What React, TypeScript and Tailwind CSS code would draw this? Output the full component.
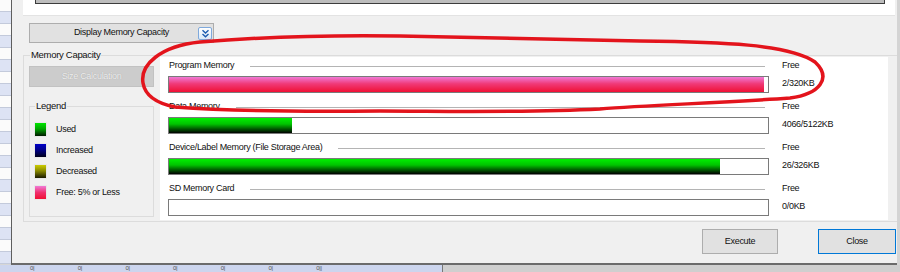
import React from 'react';

const memories = [
  { name: 'Program Memory', free: 2, total: 320, kind: 'pink' },
  { name: 'Data Memory', free: 4066, total: 5122, kind: 'green' },
  { name: 'Device/Label Memory (File Storage Area)', free: 26, total: 326, kind: 'green' },
  { name: 'SD Memory Card', free: 0, total: 0, kind: 'green' },
];

const legend = [
  { label: 'Used', cls: 'bg-[linear-gradient(to_bottom,#00e600,#00a800_45%,#001a00)]' },
  { label: 'Increased', cls: 'bg-[linear-gradient(to_bottom,#0000c8,#00008a_45%,#00001a)]' },
  { label: 'Decreased', cls: 'bg-[linear-gradient(to_bottom,#cccc00,#8a8a00_45%,#1a1a00)]' },
  { label: 'Free: 5% or Less', cls: 'bg-[linear-gradient(to_bottom,#f07ad6,#f0306e_50%,#f01034)]' },
];

const BAR_INNER = 599;

function MemoryRow({ m }: { m: (typeof memories)[number] }) {
  const used = m.total > 0 ? Math.round(((m.total - m.free) / m.total) * BAR_INNER) : 0;
  const fill =
    m.kind === 'pink'
      ? 'bg-[linear-gradient(to_bottom,#f07ad6,#f03a78_45%,#f01034)]'
      : 'bg-[linear-gradient(to_bottom,#00f000,#00c400_40%,#000000)]';
  return (
    <div className="flex h-[41px]">
      <div className="w-[601px] flex flex-col">
        <div className="h-[14px] flex items-center pl-[1px]">
          <span className="whitespace-nowrap">{m.name}</span>
          <div className="flex-1 ml-[16px] mr-[4px] h-px bg-[#b4b4b4]" />
        </div>
        <div className="mt-[3px] h-[17px] border border-[#7a7a7a] bg-white">
          <div className={`h-full ${fill}`} style={{ width: used }} />
        </div>
      </div>
      <div className="ml-[13px] flex flex-col">
        <div className="h-[14px] flex items-center">Free</div>
        <div className="h-[20px] flex items-center mt-[1px]">
          {m.free}/{m.total}KB
        </div>
      </div>
    </div>
  );
}

export default function App() {
  return (
    <div className="relative w-[900px] h-[272px] overflow-hidden bg-[#d6d6d6] text-[9px] tracking-[-0.3px] text-[#111] font-['Liberation_Sans','Arial',sans-serif]">
      <div className="flex h-[265px]">
        {/* sheet behind */}
        <div className="w-[11px] flex flex-col">
          {Array.from({ length: 22 }).map((_, i) => (
            <div
              key={i}
              className={`h-[12px] shrink-0 border-b border-[#c3cadb] ${i % 2 ? 'bg-[#dde3f4]' : 'bg-[#fbfbfb]'}`}
            />
          ))}
        </div>

        {/* dialog */}
        <div className="w-[886px] h-[265px] bg-[#f0f0f0] border-l border-[#5e5e5e] border-b-2 border-b-[#6b6b6b] flex flex-col">
          <div className="ml-[11px] mr-[2px] h-[16px] shrink-0 bg-white border-b border-[#e3e3e3]">
            <div className="ml-[12px] w-[850px] h-[4px] bg-[#bdbdbd] border-x border-b border-[#3c3c3c]" />
          </div>

          <button className="relative ml-[17px] mt-[7px] w-[185px] h-[20px] shrink-0 bg-[#e1e1e1] border border-[#adadad] text-center">
            Display Memory Capacity
            <span className="absolute right-[1px] top-[3px] w-[14px] h-[13px] rounded-[2px] border border-[#7fa9dc] bg-[linear-gradient(to_bottom,#ffffff,#dbe9f8)] flex items-center justify-center">
              <svg width="9" height="9" viewBox="0 0 9 9" fill="none" stroke="#1d5cb0" strokeWidth="1.4">
                <path d="M1.5 1.2 L4.5 4 L7.5 1.2" />
                <path d="M1.5 5 L4.5 7.8 L7.5 5" />
              </svg>
            </span>
          </button>

          {/* Memory Capacity group */}
          <div className="relative ml-[11px] mt-[12px] h-[167px] shrink-0 border-t border-l border-b border-[#dcdcdc] flex">
            <span className="absolute -top-[7px] left-[6px] px-[1px] bg-[#f0f0f0] leading-[12px] text-[9.5px]">
              Memory Capacity
            </span>

            <div className="ml-[5px] w-[125px] flex flex-col">
              <div className="mt-[10px] h-[21px] bg-[#cccccc] border border-[#c2c2c2] flex items-center justify-center text-[#efefef] [text-shadow:0_0_1px_#9a9a9a]">
                Size Calculation
              </div>
              <div className="relative mt-[19px] h-[111px] border border-[#dcdcdc]">
                <span className="absolute -top-[7px] left-[5px] px-[1px] bg-[#f0f0f0] leading-[12px] text-[9.5px]">
                  Legend
                </span>
                <div className="mt-[15px] ml-[4px] flex flex-col gap-[6px]">
                  {legend.map((l) => (
                    <div key={l.label} className="flex items-center h-[15px]">
                      <div className={`w-[13px] h-[15px] border border-[#e8e8e8] ${l.cls}`} />
                      <span className="ml-[9px]">{l.label}</span>
                    </div>
                  ))}
                </div>
              </div>
            </div>

            <div className="ml-[6px] mt-[1px] w-[728px] h-[163px] bg-white pl-[8px] pt-[2px]">
              {memories.map((m) => (
                <MemoryRow key={m.name} m={m} />
              ))}
            </div>
          </div>

          <div className="mt-[7px] mr-[1px] flex justify-end gap-[40px]">
            <button className="w-[76px] h-[25px] bg-[#e1e1e1] border border-[#adadad]">Execute</button>
            <button className="w-[78px] h-[25px] bg-[#e1e1e1] border border-[#0078d7]">Close</button>
          </div>
        </div>

        <div className="flex-1 bg-[#d4d4d4]" />
      </div>

      {/* grid header strip below */}
      <div className="flex h-[7px]">
        <div className="w-[443px] bg-[#ccd5ee] border-r border-[#777] flex pl-[30px] overflow-hidden">
          {['0|', '0|', '0|', '0|', '0|', '0|', '0||'].map((t, i) => (
            <span key={i} className="w-[47.7px] shrink-0 text-[6px] leading-[7px] text-[#555]">
              {t}
            </span>
          ))}
        </div>
        <div className="flex-1 bg-[#cfcfcf]" />
      </div>

      {/* hand-drawn annotation */}
      <svg className="absolute inset-0 pointer-events-none" width="900" height="272" viewBox="0 0 900 272" fill="none">
        <path
          d="M 143 83 C 140 65, 160 46, 200 42 C 260 37, 330 35, 400 36 C 480 38, 560 40, 640 41 C 720 42, 790 44, 815 62 C 832 78, 820 94, 790 98 C 720 103, 650 105, 600 109 C 520 113, 440 111, 380 111 C 300 112, 230 111, 175 107 C 155 103, 145 95, 143 83 Z"
          stroke="#e3141c"
          strokeWidth="3.5"
          strokeLinecap="round"
          strokeLinejoin="round"
        />
      </svg>
    </div>
  );
}
